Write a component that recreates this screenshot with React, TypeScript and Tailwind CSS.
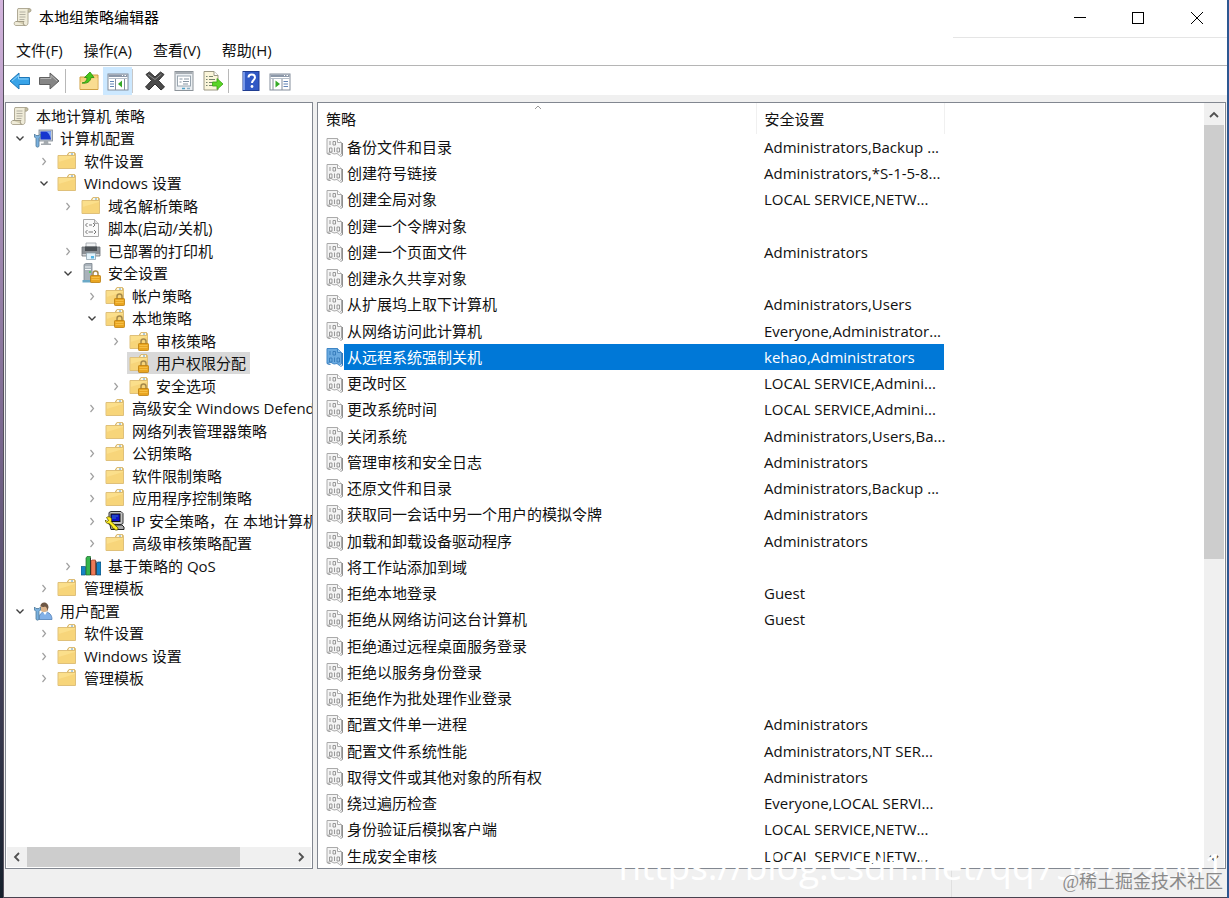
import { useState } from 'react'
import type { ReactNode } from 'react'

type IconName = 'scroll' | 'computer' | 'folder' | 'script' | 'printer' | 'server' | 'lockedFolder' | 'ipsec' | 'qos' | 'user'

interface TreeNode {
  label: string
  level: number
  icon: IconName
  state?: 'open' | 'closed'
}

interface Policy {
  name: string
  setting?: string
}

const treeNodes: TreeNode[] = [
  { label: '计算机配置', level: 1, icon: 'computer', state: 'open' },
  { label: '软件设置', level: 2, icon: 'folder', state: 'closed' },
  { label: 'Windows 设置', level: 2, icon: 'folder', state: 'open' },
  { label: '域名解析策略', level: 3, icon: 'folder', state: 'closed' },
  { label: '脚本(启动/关机)', level: 3, icon: 'script' },
  { label: '已部署的打印机', level: 3, icon: 'printer', state: 'closed' },
  { label: '安全设置', level: 3, icon: 'server', state: 'open' },
  { label: '帐户策略', level: 4, icon: 'lockedFolder', state: 'closed' },
  { label: '本地策略', level: 4, icon: 'lockedFolder', state: 'open' },
  { label: '审核策略', level: 5, icon: 'lockedFolder', state: 'closed' },
  { label: '用户权限分配', level: 5, icon: 'lockedFolder' },
  { label: '安全选项', level: 5, icon: 'lockedFolder', state: 'closed' },
  { label: '高级安全 Windows Defender', level: 4, icon: 'folder', state: 'closed' },
  { label: '网络列表管理器策略', level: 4, icon: 'folder' },
  { label: '公钥策略', level: 4, icon: 'folder', state: 'closed' },
  { label: '软件限制策略', level: 4, icon: 'folder', state: 'closed' },
  { label: '应用程序控制策略', level: 4, icon: 'folder', state: 'closed' },
  { label: 'IP 安全策略，在 本地计算机', level: 4, icon: 'ipsec', state: 'closed' },
  { label: '高级审核策略配置', level: 4, icon: 'folder', state: 'closed' },
  { label: '基于策略的 QoS', level: 3, icon: 'qos', state: 'closed' },
  { label: '管理模板', level: 2, icon: 'folder', state: 'closed' },
  { label: '用户配置', level: 1, icon: 'user', state: 'open' },
  { label: '软件设置', level: 2, icon: 'folder', state: 'closed' },
  { label: 'Windows 设置', level: 2, icon: 'folder', state: 'closed' },
  { label: '管理模板', level: 2, icon: 'folder', state: 'closed' },
]

const policies: Policy[] = [
  { name: '备份文件和目录', setting: 'Administrators,Backup ...' },
  { name: '创建符号链接', setting: 'Administrators,*S-1-5-8...' },
  { name: '创建全局对象', setting: 'LOCAL SERVICE,NETW...' },
  { name: '创建一个令牌对象' },
  { name: '创建一个页面文件', setting: 'Administrators' },
  { name: '创建永久共享对象' },
  { name: '从扩展坞上取下计算机', setting: 'Administrators,Users' },
  { name: '从网络访问此计算机', setting: 'Everyone,Administrator...' },
  { name: '从远程系统强制关机', setting: 'kehao,Administrators' },
  { name: '更改时区', setting: 'LOCAL SERVICE,Admini...' },
  { name: '更改系统时间', setting: 'LOCAL SERVICE,Admini...' },
  { name: '关闭系统', setting: 'Administrators,Users,Ba...' },
  { name: '管理审核和安全日志', setting: 'Administrators' },
  { name: '还原文件和目录', setting: 'Administrators,Backup ...' },
  { name: '获取同一会话中另一个用户的模拟令牌', setting: 'Administrators' },
  { name: '加载和卸载设备驱动程序', setting: 'Administrators' },
  { name: '将工作站添加到域' },
  { name: '拒绝本地登录', setting: 'Guest' },
  { name: '拒绝从网络访问这台计算机', setting: 'Guest' },
  { name: '拒绝通过远程桌面服务登录' },
  { name: '拒绝以服务身份登录' },
  { name: '拒绝作为批处理作业登录' },
  { name: '配置文件单一进程', setting: 'Administrators' },
  { name: '配置文件系统性能', setting: 'Administrators,NT SER...' },
  { name: '取得文件或其他对象的所有权', setting: 'Administrators' },
  { name: '绕过遍历检查', setting: 'Everyone,LOCAL SERVI...' },
  { name: '身份验证后模拟客户端', setting: 'LOCAL SERVICE,NETW...' },
  { name: '生成安全审核', setting: 'LOCAL SERVICE,NETW...' },
]

function Svg({ children }: { children: ReactNode }) {
  return (
    <svg viewBox="0 0 20 20" className="w-5 h-5 shrink-0" aria-hidden="true">
      {children}
    </svg>
  )
}

function ScrollIcon() {
  return (
    <Svg>
      <path d="M5 1.5h11.5c2 0 2 3.5 0 3.5H15v10.5c0 2-.8 3-2.2 3H3c-2.4 0-2.4-4 0-4h1.500V3z" fill="#efebd8" stroke="#b0aa96" />
      <path d="M3 14.500h8c-1.200 1-.8 4 1.300 4" fill="#d8d1b4" stroke="#a29c86" />
      <path d="M15 5V2.500c.3-1 2.500-1 2.500.8S16.500 5 15 5z" fill="#c9c2a4" stroke="#a29c86" strokeWidth=".7" />
      <path d="M6.500 5h6M6.500 7.500h6M6.500 10h6M6.500 12.500h5" stroke="#b3b0a2" />
    </Svg>
  )
}

function FolderShape() {
  return (
    <>
      <path d="M1 4.500h9L11.500 2h6.500l.5 1v14.500H1z" fill="#fbdf8b" stroke="#dfc07a" />
      <path d="M10.500 4.500 12 1.500h5.500v3z" fill="#fff8e0" stroke="#d0a850" strokeWidth=".7" />
      <path d="M14 3h2" stroke="#5a9bd0" />
      <path d="M1.500 17V11L18 6v11z" fill="#f5cf70" opacity=".6" />
    </>
  )
}

function Lock() {
  return (
    <>
      <path d="M12 13v-2.500c0-3.200 5-3.200 5 0V13" fill="none" stroke="#a58a4c" strokeWidth="1.500" />
      <rect x="9.500" y="12.500" width="10" height="7" rx=".8" fill="#e9a520" stroke="#bd7d0d" strokeWidth=".8" />
      <path d="M10.500 14.500h8M10.500 16.500h8" stroke="#f9c54d" strokeWidth=".8" />
    </>
  )
}

function Wrench() {
  return (
    <path d="M1.500 6v3l1.500 1.500V18c0 1.500 3 1.500 3 0v-7.500L7.500 9V6L6 7.500H3z" fill="#79b0de" stroke="#4e7898" strokeWidth=".8" />
  )
}

function TreeIcon({ name }: { name: IconName }) {
  switch (name) {
    case 'scroll':
      return <ScrollIcon />
    case 'computer':
      return (
        <Svg>
          <rect x="6" y="2" width="13.500" height="11" fill="#c5cbd2" stroke="#7c858f" strokeWidth=".8" />
          <rect x="7.500" y="3.500" width="10.500" height="8" fill="#1735cf" />
          <path d="M13 3.500h5v8c-1-4-2-6.500-5-8z" fill="#7da6f5" />
          <path d="M11 13h4l.5 2.500h2.500V17H8v-1.500h2.500z" fill="#a3a9ae" />
          <Wrench />
        </Svg>
      )
    case 'folder':
      return (
        <Svg>
          <FolderShape />
        </Svg>
      )
    case 'lockedFolder':
      return (
        <Svg>
          <FolderShape />
          <Lock />
        </Svg>
      )
    case 'script':
      return (
        <Svg>
          <path d="M2.500 1.500h11l4 4v13h-15z" fill="#fafafa" stroke="#a9a9a9" />
          <path d="M13.500 1.500v4h4" fill="#e2e2e2" stroke="#a9a9a9" />
          <path d="M6.500 5 4.500 7l2 2M12 5l2 2-2 2M8 7h3M6.500 12l-2 2 2 2M13 12l2 2-2 2M7.500 14h4.500" fill="none" stroke="#777" />
        </Svg>
      )
    case 'printer':
      return (
        <Svg>
          <path d="M5 2h10v6H5z" fill="#f0f2f3" stroke="#9aa0a5" strokeWidth=".8" />
          <path d="M1 6h18v9H1z" fill="#8c9196" stroke="#6b7075" strokeWidth=".8" />
          <path d="M4 5.500h12V10H4z" fill="#4b5055" />
          <path d="M1.500 13h17v1.500h-17z" fill="#d2d5d8" />
          <path d="M5.500 12h9v6.500h-9z" fill="#e4f3fb" stroke="#8fa4b0" strokeWidth=".8" />
          <path d="M10 15h3v2.500h-3z" fill="#51b5e6" />
        </Svg>
      )
    case 'server':
      return (
        <Svg>
          <path d="M3 1.500 5 .5h6v18H3z" fill="#a9b2ba" stroke="#7b858e" strokeWidth=".8" />
          <path d="M4 4h6M4 6.500h6" stroke="#f2f6f8" strokeWidth="1.200" />
          <path d="M8 9h2" stroke="#3dcf4d" strokeWidth="1.500" />
          <path d="M1.500 17h11v2.500h-11z" fill="#6aa8c6" />
          <Lock />
        </Svg>
      )
    case 'ipsec':
      return (
        <Svg>
          <path d="M4 1.500 6 .5h10l2 2v10l-2 1H4z" fill="#c2c2c2" stroke="#333" />
          <rect x="6" y="3" width="9" height="7.500" fill="#1010c8" stroke="#111" />
          <path d="M7 5h6M7 7h4" stroke="#37c" />
          <path d="M5 14h12l2 2v2.500H6z" fill="#aaa" stroke="#222" />
          <path d="M1.500 6.500c2-1.500 4.500-.5 5 1.500.3 1 0 1.800-.4 2.500l7 6.500-.6 2h-2.300l-1-1.500-1.700-.3-.3-1.700-3.200-3c-2.500.3-4-1.500-3.500-3.500l1.500 1.500 1.500-1z" fill="#ffee20" stroke="#5e5600" strokeWidth=".8" />
        </Svg>
      )
    case 'qos':
      return (
        <Svg>
          <path d="M0 10.500h4.500V19H0z" fill="#1684c5" stroke="#0d5583" strokeWidth=".7" />
          <path d="M5 2l1-1.500h3.500V19H5z" fill="#36b54c" stroke="#176929" strokeWidth=".7" />
          <path d="M10 5l1-1h3.500v15H10z" fill="#ef7b58" stroke="#a43f23" strokeWidth=".7" />
          <path d="M15.500 7l1-1H20v13h-4.500z" fill="#1684c5" stroke="#123f60" strokeWidth=".7" />
          <path d="M9.500 2v17M15 5v14" stroke="#222" strokeWidth=".8" />
        </Svg>
      )
    case 'user':
      return (
        <Svg>
          <path d="M6 18.500c0-5 2-7.500 6-7.500s7 2.500 7 7.500z" fill="#83b1e8" stroke="#5280b8" strokeWidth=".8" />
          <circle cx="11" cy="7" r="4" fill="#ddb48b" />
          <path d="M7.500 5C7.500 0 15.500 0 15.500 6.500L14 11c.5-3 0-4.500-2-5.500-1.500.8-3 .8-4.500-.5z" fill="#6d5745" />
          <path d="m10 11 2 3 2-3z" fill="#fff" />
          <Wrench />
        </Svg>
      )
  }
}

function PolicyIcon({ selected }: { selected: boolean }) {
  const edge = selected ? '#3f86c6' : '#aaa'
  const digit = selected ? '#3479b8' : '#8f8f8f'
  return (
    <svg viewBox="0 0 18 20" className="w-[18px] h-5 block" fill="none" aria-hidden="true">
      <path d="M1 1.500h10.500l4 4V17l-2 1.500-2.500-2-3 .5L5 15.500l-4 1z" fill={selected ? '#6aaae0' : '#f4f4f4'} stroke={edge} />
      <path d="M11.500 1.500v4h4" fill={selected ? '#8cc2ef' : '#fff'} stroke={edge} />
      <path d="M16.500 6v12.500l-2 1M1.500 17l3 .5" stroke={digit} />
      <path d="M4 4v4M7 4.500h2.500V8H7zM3.500 11H6v4H3.500zM8.500 10.500V15M11 11h2.500v4H11z" stroke={digit} strokeWidth=".9" />
    </svg>
  )
}

function Chevron({ state }: { state?: 'open' | 'closed' }) {
  return (
    <svg viewBox="0 0 16 16" className="w-4 h-4 shrink-0" fill="none" aria-hidden="true">
      {state === 'open' && <path d="m4.500 6.500 3.500 3.500 3.500-3.500" stroke="#404040" strokeWidth="1.400" />}
      {state === 'closed' && <path d="m6.500 5 3 3.500-3 3.500" stroke="#a0a0a0" strokeWidth="1.200" />}
    </svg>
  )
}

function ScrollArrow({ label, d }: { label: string; d: string }) {
  return (
    <button aria-label={label} className="flex items-center justify-center shrink-0 w-5 h-5">
      <svg viewBox="0 0 12 12" className="w-3 h-3" fill="none" stroke="#505050" strokeWidth="1.800">
        <path d={d} />
      </svg>
    </button>
  )
}

function ToolButton({ label, active, children }: { label: string; active?: boolean; children: ReactNode }) {
  return (
    <button aria-label={label} className={`flex items-center justify-center w-[29px] h-7 ${active ? 'bg-[#cce8ff]' : ''}`}>
      <svg viewBox="0 0 22 22" className="w-[22px] h-[22px]" aria-hidden="true">
        {children}
      </svg>
    </button>
  )
}

function Toolbar() {
  return (
    <div className="flex items-center h-[29px] pl-px bg-white">
      <ToolButton label="后退">
        <path d="M1 11 10 3v4.500h10.500v7H10V19z" fill="#38a3e8" stroke="#1e77b8" />
        <path d="M3 11 9.500 5.500V9H19.500" fill="none" stroke="#8ad0fa" />
      </ToolButton>
      <ToolButton label="前进">
        <path d="M21 11 12 3v4.500H1.500v7H12V19z" fill="#858585" stroke="#606060" />
        <path d="M2.500 8.500H13V5.500L19 11" fill="none" stroke="#b5b5b5" />
      </ToolButton>
      <span className="w-px h-6 bg-[#b8b8b8] ml-[2px] mr-2" />
      <ToolButton label="向上">
        <path d="M2 7h8l2-2h8v14.500H2z" fill="#f6d27a" stroke="#cfa043" />
        <path d="M2.500 19V12L19.500 8v11z" fill="#f9dc91" />
        <path d="M4 13c3.500-.5 5-2.500 5-5.500H6.500L12 2l4 5.500h-3c-.5 4-4 6.500-9 5.500z" fill="#47c71b" stroke="#2a8d0e" strokeWidth=".8" />
      </ToolButton>
      <ToolButton label="显示/隐藏控制台树" active>
        <rect x="1" y="4" width="20" height="16" fill="#fff" stroke="#848e9c" />
        <path d="M1.500 4.500h19V7h-19z" fill="#8c98a9" />
        <path d="M15 5.500h1M17.500 5.500h1.500" stroke="#fff" />
        <path d="M1.500 8.500h19" stroke="#b6bfca" />
        <path d="M3 11.500h4M3 14h4M3 16.500h4" stroke="#6284b5" strokeWidth="1.200" />
        <path d="M8.500 9v11" stroke="#848e9c" />
        <path d="M15 10.500v7L11 14z" fill="#36aa27" />
        <path d="M17.500 9v11" stroke="#848e9c" />
      </ToolButton>
      <span className="w-px h-6 bg-[#c8c8c8] mr-[7px]" />
      <ToolButton label="删除">
        <path d="M2 4.500 5.500 2 11 7l5.500-5L20 4.500 14.500 10.500 20.500 17 17 20l-6-6-6 6-3.500-3L7.500 10.500z" fill="#4b4b4b" stroke="#303030" />
        <path d="m4 4.500 7 5 6.500-5.500" fill="none" stroke="#8b8b8b" />
      </ToolButton>
      <ToolButton label="属性">
        <rect x="2" y="1.500" width="18" height="19" fill="#ebeff2" stroke="#8d949a" />
        <path d="M2.500 2h17v2h-17z" fill="#a7adb3" />
        <rect x="4.500" y="6" width="13" height="10" fill="#fff" stroke="#99a5af" />
        <path d="M6.500 9h3M6.500 12h2M11 9h5M10 11.500h6M10 14h5" stroke="#8795a2" />
        <path d="M9 18.500h3" stroke="#4ea2c9" strokeWidth="1.500" />
        <path d="M14 18.500h3" stroke="#8fb2c4" strokeWidth="1.500" />
      </ToolButton>
      <ToolButton label="导出列表">
        <path d="M2 1.500h10l4 4V20H2z" fill="#fbf6da" stroke="#9b9884" />
        <path d="M12 1.500v4h4" fill="#fff" stroke="#9b9884" />
        <path d="M4 6.500h1.500M7 6.500h4M4 9.500h1.500M7 9.500h6M4 12.500h1.500M7 12.500h3M4 15.500h1.500M7 15.500h4" stroke="#77836f" />
        <path d="M10.500 12H15V8.500l6 5.500-6 5.500V16h-4.500z" fill="#5bd626" stroke="#37a113" strokeWidth=".8" />
      </ToolButton>
      <span className="w-px h-6 bg-[#b8b8b8] ml-px mr-[7px]" />
      <ToolButton label="帮助">
        <rect x="3" y="1.500" width="16" height="19" fill="#3159c5" stroke="#203d91" />
        <path d="M4 2v18" stroke="#7798e8" strokeWidth="2" />
        <path d="M8.500 7.500C8.500 3.500 15 3.500 15 7.500c0 2.500-3 2.500-3 5.500" fill="none" stroke="#fff" strokeWidth="2" />
        <circle cx="12" cy="16.500" r="1.400" fill="#fff" />
      </ToolButton>
      <ToolButton label="显示/隐藏操作窗格">
        <rect x="1" y="4" width="20" height="16" fill="#fff" stroke="#848e9c" />
        <path d="M1.500 4.500h19V7h-19z" fill="#8c98a9" />
        <path d="M15 5.500h1M17.500 5.500h1.500" stroke="#fff" />
        <path d="M1.500 8.500h19" stroke="#b6bfca" />
        <path d="M4 9v11M13 9v11" stroke="#848e9c" />
        <path d="M6.500 10.500v7L11 14z" fill="#36aa27" />
        <path d="M14.500 11.500H19M14.500 14H19M14.500 16.500H19" stroke="#6284b5" strokeWidth="1.200" />
      </ToolButton>
    </div>
  )
}

function TitleBar() {
  return (
    <header className="flex justify-between h-[37px] bg-white pl-[9px]">
      <div className="flex items-center gap-[6px] h-[34px]">
        <ScrollIcon />
        <h1 className="text-black">本地组策略编辑器</h1>
      </div>
      <div className="flex">
        <button aria-label="最小化" className="flex items-center justify-center w-[58px] h-9">
          <svg viewBox="0 0 12 12" className="w-3 h-3" stroke="#000" fill="none">
            <path d="M0 5.500h12" />
          </svg>
        </button>
        <button aria-label="最大化" className="flex items-center justify-center w-[58px] h-9">
          <svg viewBox="0 0 12 12" className="w-3 h-3" stroke="#000" fill="none">
            <rect x=".5" y=".5" width="11" height="11" />
          </svg>
        </button>
        <button aria-label="关闭" className="flex items-center justify-center w-[60px] h-9">
          <svg viewBox="0 0 12 12" className="w-3 h-3" stroke="#000" fill="none">
            <path d="m0 0 12 12M12 0 0 12" />
          </svg>
        </button>
      </div>
    </header>
  )
}

function ConsoleTree({ selected, onSelect }: { selected: number; onSelect: (index: number) => void }) {
  return (
    <nav className="flex flex-col w-[308px] shrink-0 bg-white border border-[#828790]">
      <div className="flex-1 min-h-0 overflow-hidden pt-[2px] pr-px">
        <button className="flex items-center gap-[6px] h-[22px] pl-1 whitespace-nowrap">
          <ScrollIcon />
          本地计算机 策略
        </button>
        <ul>
          {treeNodes.map((node, index) => (
            <li key={index} className="flex items-center h-[22px] even:h-[23px]" style={{ paddingLeft: 6 + (node.level - 1) * 24 }}>
              <Chevron state={node.state} />
              <button
                onClick={() => onSelect(index)}
                className={`flex items-center gap-[7px] h-full ml-[3px] pl-[2px] pr-1 whitespace-nowrap ${index === selected ? 'bg-[#d9d9d9]' : ''}`}
              >
                <TreeIcon name={node.icon} />
                {node.label}
              </button>
            </li>
          ))}
        </ul>
      </div>
      <div className="flex items-center h-5 mx-px mb-px bg-[#f0f0f0]">
        <ScrollArrow label="向左滚动" d="M8 2 4 6l4 4" />
        <div className="flex-1 h-full pr-2">
          <div className="w-5/6 h-full bg-[#cdcdcd]" />
        </div>
        <ScrollArrow label="向右滚动" d="m4 2 4 4-4 4" />
      </div>
    </nav>
  )
}

function PolicyList({ selected, onSelect }: { selected: number; onSelect: (index: number) => void }) {
  return (
    <main className="flex flex-1 min-w-0 bg-white border border-[#828790]">
      <div className="relative flex-1 min-w-0 overflow-hidden">
        <table className="table-fixed w-[626px] text-left whitespace-nowrap">
          <colgroup>
            <col className="w-[26px]" />
            <col className="w-[412px]" />
            <col className="w-[188px]" />
          </colgroup>
          <thead>
            <tr className="h-[31px]">
              <th colSpan={2} className="font-normal pl-2 pt-px border-r border-[#f0f0f0]">策略</th>
              <th className="font-normal pl-2 pt-px border-r border-[#f0f0f0]">安全设置</th>
            </tr>
          </thead>
          <tbody>
            {policies.map((policy, index) => {
              const isSelected = index === selected
              const cell = isSelected ? 'bg-[#0078d7] text-white' : ''
              return (
                <tr key={policy.name} onClick={() => onSelect(index)} className="h-[26px] nth-[4n]:h-[27px]">
                  <td className="pl-2">
                    <PolicyIcon selected={isSelected} />
                  </td>
                  <td className={`pl-[3px] ${cell}`}>{policy.name}</td>
                  <td className={`pl-2 ${cell}`}>{policy.setting}</td>
                </tr>
              )
            })}
          </tbody>
        </table>
        {/* sort direction mark above the first header */}
        <svg viewBox="0 0 8 5" className="absolute top-[2px] left-[216px] w-2 h-[5px]" fill="none" stroke="#999" aria-hidden="true">
          <path d="m1 4 3-3 3 3" />
        </svg>
      </div>
      <div className="flex flex-col items-center w-5 mr-px pt-[2px] bg-[#f0f0f0]">
        <ScrollArrow label="向上滚动" d="m2 8 4-4 4 4" />
        <div className="flex-1 w-full">
          <div className="w-full h-3/5 bg-[#cdcdcd]" />
        </div>
        <ScrollArrow label="向下滚动" d="m2 4 4 4 4-4" />
      </div>
    </main>
  )
}

export default function App() {
  const [node, setNode] = useState(10)
  const [policy, setPolicy] = useState(8)

  return (
    <div className="relative flex h-screen overflow-hidden text-[15px] leading-[22px] text-[#111] font-['Open_Sans','Noto_Sans_CJK_SC',sans-serif]">
      <div className="w-1 shrink-0 bg-linear-to-b from-[#d3b5dd] via-[#77668c] to-[#15202c] border-r border-[#55505c]" />
      <div className="flex flex-col flex-1 min-w-0 bg-[#f0f0f0] border-b border-[#4a4350]">
        <TitleBar />
        <div className="flex justify-end bg-white">
          <span className="w-[274px] h-px bg-[#e5e5e5]" />
        </div>
        <div className="flex gap-[21px] h-7 pl-3 bg-white border-b border-[#b5b5b5]">
          {['文件(F)', '操作(A)', '查看(V)', '帮助(H)'].map((item) => (
            <button key={item} className="h-6">
              {item}
            </button>
          ))}
        </div>
        <Toolbar />
        <div className="flex flex-1 min-h-0 gap-1 pt-[7px] pl-px pr-px">
          <ConsoleTree selected={node} onSelect={setNode} />
          <PolicyList selected={policy} onSelect={setPolicy} />
        </div>
        <footer className="flex justify-end h-7">
          <span className="w-[276px] border-l border-[#e0e0e0]" />
        </footer>
      </div>
      <div className="w-[2px] shrink-0 bg-[#2d5791]" />
      <p className="absolute right-1 bottom-2 text-[37px] leading-[48px] text-white whitespace-nowrap pointer-events-none">
        https://blog.csdn.net/qq754772001
      </p>
      <p className="absolute right-[6px] bottom-1 text-[18px] leading-6 text-[#8a8a8a] whitespace-nowrap pointer-events-none font-['Liberation_Serif','Noto_Sans_CJK_SC',serif]">
        @稀土掘金技术社区
      </p>
    </div>
  )
}
